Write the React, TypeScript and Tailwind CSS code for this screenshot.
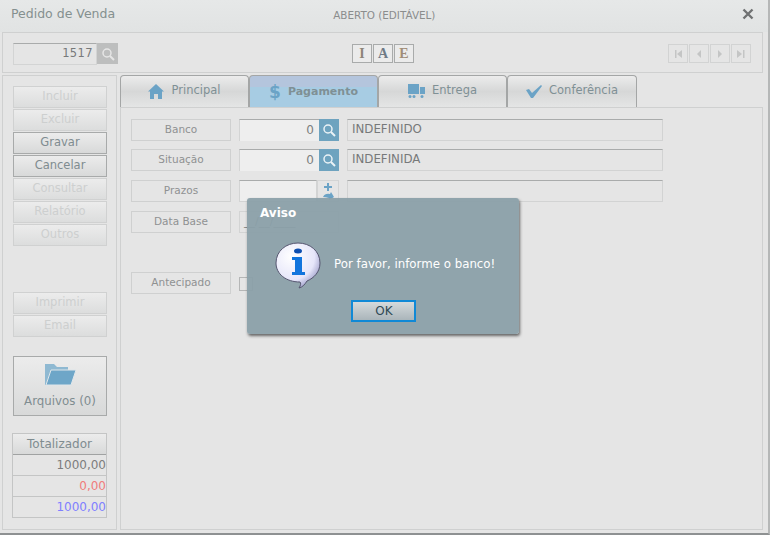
import type { ReactNode } from "react";

const FONT = "font-['DejaVu_Sans',sans-serif]";

function Lupa({ cor }: { cor: string }) {
  return (
    <svg width="14" height="14" viewBox="0 0 14 14" fill="none" stroke={cor}>
      <circle cx="6" cy="6" r="4" strokeWidth="1.5" />
      <path d="M9 9l4 4" strokeWidth="2" />
    </svg>
  );
}

function BotaoLateral({ children, ativo }: { children: string; ativo?: boolean }) {
  return (
    <button
      className={
        ativo
          ? "flex h-[22px] w-[94px] items-center justify-center border border-[#a8aaaa] bg-gradient-to-b from-[#ececec] to-[#d8d9d9] pb-[1px] text-[11.5px] text-[#7f8c90]"
          : "flex h-[22px] w-[94px] items-center justify-center border border-[#d0d1d1] bg-gradient-to-b from-[#ececec] to-[#dcdddd] pb-[1px] text-[11.5px] text-[#cdcfcf]"
      }
    >
      {children}
    </button>
  );
}

function Rotulo({ children }: { children: string }) {
  return (
    <div className="flex h-[22px] w-[100px] shrink-0 items-center justify-center border border-[#cfd0d0] text-[10.5px] text-[#8f9192]">
      {children}
    </div>
  );
}

function Aba({ icone, texto, ativa, largura }: { icone: ReactNode; texto: string; ativa?: boolean; largura: string }) {
  return (
    <div
      className={`flex h-[32px] ${largura} items-center justify-center gap-[7px] rounded-t-[4px] border border-b-0 border-[#a4a6a6] ${
        ativa
          ? "border-b border-b-[#8db3d8] bg-gradient-to-b from-[#b4c5dd] from-35% to-[#a7cce3] to-35% pt-[2px]"
          : "bg-gradient-to-b from-[#ececec] via-[#d6d7d7] to-[#e4e5e5] pb-[1px]"
      }`}
    >
      {icone}
      <span className={ativa ? "text-[11px] font-bold text-[#7f9095]" : "text-[11.5px] text-[#7f9095]"}>{texto}</span>
    </div>
  );
}

function Navegacao({ d }: { d: string }) {
  return (
    <div className="flex h-[19px] w-[20px] items-center justify-center border border-[#d2d3d3]">
      <svg width="10" height="10" viewBox="0 0 10 10" fill="#c4c5c5">
        <path d={d} />
      </svg>
    </div>
  );
}

function LinhaCampo({ children, rotulo, className }: { children?: ReactNode; rotulo: string; className?: string }) {
  return (
    <div className={`flex h-[22px] items-stretch ${className ?? ""}`}>
      <Rotulo>{rotulo}</Rotulo>
      {children}
    </div>
  );
}

function CampoBusca({ descricao }: { descricao: string }) {
  return (
    <>
      <div className="ml-2 flex h-[22px] w-[80px] items-center justify-end border-t border-l border-t-[#a9abab] border-l-[#d3d4d4] bg-[#eeeeee] pr-[5px] pb-[2px] text-[12px] text-[#7d7f80]">
        0
      </div>
      <div className="flex h-[22px] w-[20px] items-center justify-center bg-[#6ea3bf]">
        <Lupa cor="#eaf2f6" />
      </div>
      <div className="ml-2 flex h-[22px] w-[316px] items-center border border-[#d2d3d3] border-t-[#a9abab] pl-1 text-[11.8px] text-[#77797a]">
        {descricao}
      </div>
    </>
  );
}

export default function App() {
  return (
    <div className={`${FONT} relative flex h-[535px] w-[770px] flex-col overflow-hidden border-r-2 border-b-2 border-r-[#b5b7b7] border-b-[#8e9192] bg-[#e5e5e5]`}>
      {/* barra de titulo */}
      <header className="flex h-[32px] shrink-0 items-center bg-gradient-to-b from-[#e6e8e8] to-[#e1e3e3] pr-[14px] pl-[11px]">
        <span className="mb-[4px] text-[12.5px] text-[#84908f]">Pedido de Venda</span>
        <span className="ml-[218px] text-[10.4px] text-[#8b8d8d]">ABERTO (EDITÁVEL)</span>
        <svg className="mb-[4px] ml-auto" width="12" height="12" viewBox="0 0 12 12" stroke="#6f7172" strokeWidth="2.4">
          <path d="M1.500 1.500l9 9M10.500 1.500l-9 9" />
        </svg>
      </header>

      {/* barra de ferramentas */}
      <div className="mr-[5px] ml-[2px] flex h-[41px] shrink-0 items-center border border-[#cfd0d0] pt-[2px] pr-[11px] pl-[10px]">
        <div className="flex h-[22px] w-[84px] items-center justify-end border border-[#d3d4d4] border-t-[#a9abab] pr-[3px] text-[11.5px] tracking-[0.4px] text-[#77797a]">
          1517
        </div>
        <div className="flex h-[21px] w-[21px] items-center justify-center bg-[#bdbebe]">
          <Lupa cor="#e6e6e6" />
        </div>
        <div className="ml-[234px] flex gap-[1px]">
          {["I", "A", "E"].map((l, i) => (
            <div
              key={l}
              className={`flex h-[19px] w-[20px] items-center justify-center border border-[#a9abab] bg-[#ebebeb] font-['Liberation_Serif',serif] text-[14px] font-bold ${
                i === 0 ? "text-[#8d8478]" : i === 1 ? "text-[#6f7a86]" : "text-[#a08d78]"
              }`}
            >
              {l}
            </div>
          ))}
        </div>
        <div className="ml-auto flex gap-[1px]">
          <Navegacao d="M2 1h1.500v8H2zM9 1v8L4 5z" />
          <Navegacao d="M7 1v8L3 5z" />
          <Navegacao d="M3 1v8l4-4z" />
          <Navegacao d="M1 1v8l5-4zM7 1h1.500v8H7z" />
        </div>
      </div>

      <div className="mt-[2px] flex min-h-0 flex-1 pr-[5px] pb-[3px] pl-[2px]">
        {/* coluna esquerda */}
        <aside className="flex w-[115px] shrink-0 flex-col border border-[#cfd0d0] pt-[10px] pl-[10px]">
          <div className="flex flex-col gap-[1px]">
            <BotaoLateral>Incluir</BotaoLateral>
            <BotaoLateral>Excluir</BotaoLateral>
            <BotaoLateral ativo>Gravar</BotaoLateral>
            <BotaoLateral ativo>Cancelar</BotaoLateral>
            <BotaoLateral>Consultar</BotaoLateral>
            <BotaoLateral>Relatório</BotaoLateral>
            <BotaoLateral>Outros</BotaoLateral>
          </div>
          <div className="mt-[46px] flex flex-col gap-[1px]">
            <BotaoLateral>Imprimir</BotaoLateral>
            <BotaoLateral>Email</BotaoLateral>
          </div>
          <button className="mt-[19px] flex h-[60px] w-[94px] flex-col items-center border border-[#a8aaaa] bg-gradient-to-b from-[#ececec] to-[#d8d9d9] pt-[6px]">
            <svg width="32" height="23" viewBox="0 0 32 23">
              <path d="M1 1h9l3 3h11v3H9L3 22H1z" fill="#8fb9d2" />
              <path d="M7 7h25l-5 15H2z" fill="#6ea6c8" stroke="#dfe6ea" strokeWidth="1" />
            </svg>
            <span className="mt-[7px] text-[11.8px] text-[#7f8c90]">Arquivos (0)</span>
          </button>
          <div className="mt-[17px] -ml-[1px] flex w-[95px] flex-col border border-[#c4c5c5]">
            <div className="flex h-[21px] items-center justify-center border-b border-b-[#a0a2a2] bg-gradient-to-b from-[#ececec] to-[#d8d9d9] pb-[1px] text-[12px] text-[#7f8c90]">
              Totalizador
            </div>
            <div className="flex h-[21px] items-center justify-end border-b border-[#c4c5c5] text-[12px] text-[#7d7d7d]">1000,00</div>
            <div className="flex h-[21px] items-center justify-end border-b border-[#c4c5c5] text-[12px] text-[#f07c7c]">0,00</div>
            <div className="flex h-[20px] items-center justify-end text-[12px] text-[#8080ff]">1000,00</div>
          </div>
        </aside>

        {/* abas e conteudo */}
        <main className="ml-[3px] flex min-w-0 flex-1 flex-col">
          <div className="flex h-[32px] shrink-0">
            <Aba
              largura="w-[129px]"
              texto="Principal"
              icone={
                <svg width="16" height="15" viewBox="0 0 16 15" fill="#6ba3c6">
                  <path d="M8 0l8 7.500h-2V15h-4v-5H6v5H2V7.500H0z" />
                </svg>
              }
            />
            <Aba
              largura="w-[129px]"
              ativa
              texto="Pagamento"
              icone={<span className="text-[17px] leading-none font-bold text-[#6ba3c6]">$</span>}
            />
            <Aba
              largura="w-[129px]"
              texto="Entrega"
              icone={
                <svg width="17" height="14" viewBox="0 0 17 14" fill="#6ba3c6">
                  <path d="M0 0h11v10H0zM12 3h5v7h-5z" />
                  <circle cx="2" cy="12.500" r="1.500" />
                  <circle cx="6" cy="12.500" r="1.500" />
                  <circle cx="14" cy="12.500" r="1.500" />
                </svg>
              }
            />
            <Aba
              largura="w-[130px]"
              texto="Conferência"
              icone={
                <svg width="16" height="13" viewBox="0 0 16 13" fill="#6ba3c6">
                  <path d="M0 5l3-1 3 4 9-8 1 1-9 12H5z" />
                </svg>
              }
            />
          </div>
          <section className="flex min-h-0 flex-1 flex-col border border-[#cfd0d0] pt-[11px] pl-[10px]">
            <LinhaCampo rotulo="Banco">
              <CampoBusca descricao="INDEFINIDO" />
            </LinhaCampo>
            <LinhaCampo rotulo="Situação" className="mt-[8px]">
              <CampoBusca descricao="INDEFINIDA" />
            </LinhaCampo>
            <LinhaCampo rotulo="Prazos" className="mt-[9px]">
              <div className="ml-2 h-[22px] w-[78px] border border-[#d3d4d4] border-t-[#a9abab] bg-[#eeeeee]" />
              <div className="flex h-[22px] w-[22px] flex-col items-center border border-[#d3d4d4]">
                <svg width="14" height="20" viewBox="0 0 14 20" fill="#6ba3c6">
                  <path d="M6 2h2v3h3v2H8v3H6V7H3V5h3zM2 16q2-4 7-3l1-2 3 5-5 3v-2q-3-1-6-1z" />
                </svg>
              </div>
              <div className="ml-2 h-[22px] w-[316px] border border-[#d2d3d3] border-t-[#a9abab]" />
            </LinhaCampo>
            <LinhaCampo rotulo="Data Base" className="mt-[9px]">
              <div className="ml-2 flex h-[22px] w-[100px] items-center border border-[#d3d4d4] pl-[4px] text-[11px] text-[#77797a]">
                __/__/____
              </div>
            </LinhaCampo>
            <LinhaCampo rotulo="Antecipado" className="mt-[39px]">
              <div className="mt-[5px] ml-2 h-[14px] w-[14px] border border-[#b5b6b6]" />
            </LinhaCampo>
          </section>
        </main>
      </div>

      {/* dialogo de aviso, sobre o conteudo */}
      <div className="absolute top-[198px] left-[247px] flex h-[136px] w-[272px] flex-col rounded-[3px] bg-[#8ba0a9]/95 shadow-[1px_2px_3px_rgba(60,60,60,0.75)]">
        <div className="pt-[6px] pl-[13px] text-[12px] font-bold text-white">Aviso</div>
        <div className="mt-[19px] flex items-center pl-[28px]">
          <svg width="46" height="48" viewBox="0 0 46 48">
            <defs>
              <radialGradient id="balao" cx="35%" cy="30%" r="75%">
                <stop offset="0%" stopColor="#ffffff" />
                <stop offset="70%" stopColor="#e6e6fa" />
                <stop offset="100%" stopColor="#9c9cc8" />
              </radialGradient>
            </defs>
            <path
              d="M23 2c12 0 22 8 22 20 0 9-6 15-13 18-2 3-4 6-8 7 2-3 2-5 1-6C11 41 1 33 1 22 1 10 11 2 23 2z"
              fill="url(#balao)"
              stroke="#55556f"
              strokeWidth="1"
            />
            <ellipse cx="23" cy="10" rx="4" ry="2.500" fill="#0f4fb0" />
            <path d="M17 16h10v15h3v3H17v-3h3V19h-3z" fill="#1275dd" />
          </svg>
          <span className="ml-[13px] text-[11.8px] text-white">Por favor, informe o banco!</span>
        </div>
        <button className="mx-auto mt-[11px] flex h-[22px] w-[65px] items-center justify-center border-2 border-[#1089d6] bg-gradient-to-b from-[#d5dadc] to-[#aab5ba] pl-[2px] text-[12px] text-[#2f4a55]">
          OK
        </button>
      </div>
    </div>
  );
}
